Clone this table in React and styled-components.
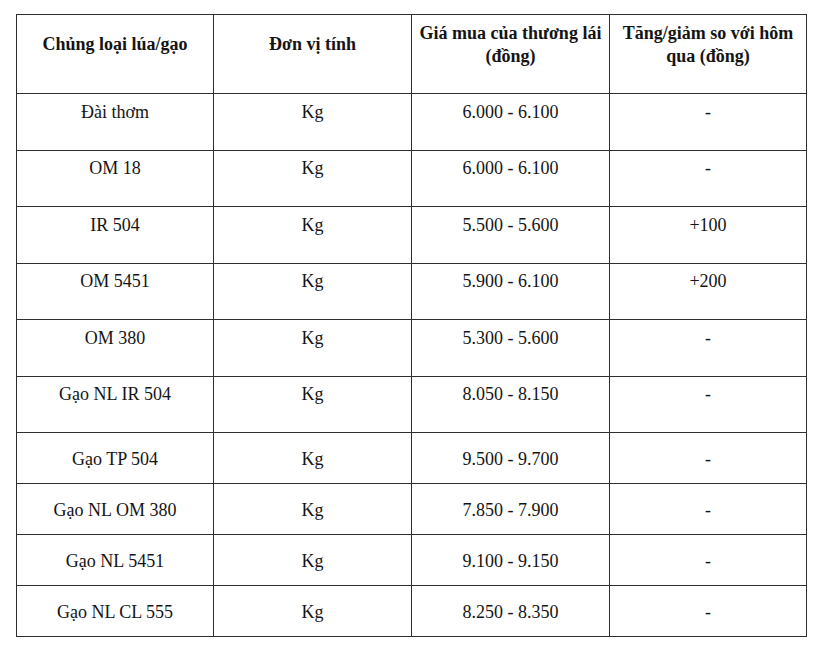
import styled, { createGlobalStyle } from "styled-components";

const GlobalStyle = createGlobalStyle`
    html, body {
        margin: 0;
        padding: 0;
        background: #fff;
    }
`;

// bảng giá lúa gạo
const rows = [
    { name: "Đài thơm", unit: "Kg", price: "6.000 - 6.100", diff: "-", tall: true },
    { name: "OM 18", unit: "Kg", price: "6.000 - 6.100", diff: "-", tall: true },
    { name: "IR 504", unit: "Kg", price: "5.500 - 5.600", diff: "+100", tall: true },
    { name: "OM 5451", unit: "Kg", price: "5.900 - 6.100", diff: "+200", tall: true },
    { name: "OM 380", unit: "Kg", price: "5.300 - 5.600", diff: "-", tall: true },
    { name: "Gạo NL IR 504", unit: "Kg", price: "8.050 - 8.150", diff: "-", tall: true },
    { name: "Gạo TP 504", unit: "Kg", price: "9.500 - 9.700", diff: "-" },
    { name: "Gạo NL OM 380", unit: "Kg", price: "7.850 - 7.900", diff: "-" },
    { name: "Gạo NL 5451", unit: "Kg", price: "9.100 - 9.150", diff: "-" },
    { name: "Gạo NL CL 555", unit: "Kg", price: "8.250 - 8.350", diff: "-" },
];

function App() {
    return (
        <>
            <GlobalStyle />
            <Page>
                <Table>
                    <colgroup>
                        <col style={{ width: 197 }} />
                        <col style={{ width: 198 }} />
                        <col style={{ width: 198 }} />
                        <col style={{ width: 197 }} />
                    </colgroup>
                    <thead>
                        <tr>
                            <Th>Chủng loại lúa/gạo</Th>
                            <Th>Đơn vị tính</Th>
                            <Th>Giá mua của thương lái (đồng)</Th>
                            <Th>Tăng/giảm so với hôm qua (đồng)</Th>
                        </tr>
                    </thead>
                    <tbody>
                        {rows.map((r) => (
                            <Row key={r.name} $tall={r.tall}>
                                <Td $tall={r.tall}>{r.name}</Td>
                                <Td $tall={r.tall}>{r.unit}</Td>
                                <Td $tall={r.tall}>{r.price}</Td>
                                <Td $tall={r.tall}>{r.diff}</Td>
                            </Row>
                        ))}
                    </tbody>
                </Table>
            </Page>
        </>
    );
}

const Page = styled.div`
    padding: 14px 0 0 16px;
    font-family: "Liberation Serif", "Times New Roman", serif;
    color: #141414;
`;

const Table = styled.table`
    width: 791px;
    border-collapse: collapse;
    table-layout: fixed;
    border: 1px solid #2e2e2e;
`;

const Th = styled.th`
    height: 79px;
    box-sizing: border-box;
    padding: 4px 4px 23px;
    border: 1px solid #2e2e2e;
    font-size: 18px;
    font-weight: bold;
    line-height: 23px;
    text-align: center;
    vertical-align: middle;
`;

const Row = styled.tr`
    height: ${({ $tall }) => ($tall ? "56.5px" : "51px")};
`;

const Td = styled.td`
    box-sizing: border-box;
    padding: ${({ $tall }) => ($tall ? "2px 6px 22px" : "3px 6px 2px")};
    border: 1px solid #2e2e2e;
    font-size: 18px;
    line-height: 22px;
    text-align: center;
    vertical-align: middle;
`;

export default App;
